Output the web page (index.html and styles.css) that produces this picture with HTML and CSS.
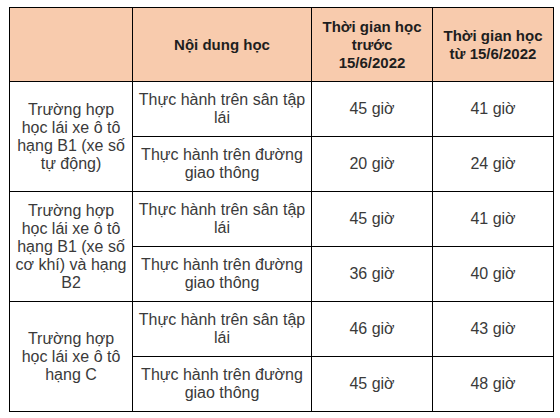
FILE: index.html
```html
<!DOCTYPE html>
<html lang="vi">
<head>
<meta charset="utf-8">
<link rel="stylesheet" href="styles.css">
</head>
<body>
<div class="page">
<table class="schedule">
  <colgroup>
    <col class="c1"><col class="c2"><col class="c3"><col class="c4">
  </colgroup>
  <thead>
    <tr class="head">
      <th></th>
      <th>Nội dung học</th>
      <th>Thời gian học trước 15/6/2022</th>
      <th>Thời gian học từ 15/6/2022</th>
    </tr>
  </thead>
  <tbody>
    <tr class="r">
      <td rowspan="2">Trường hợp học lái xe ô tô hạng B1 (xe số tự động)</td>
      <td>Thực hành trên sân tập lái</td>
      <td>45 giờ</td>
      <td>41 giờ</td>
    </tr>
    <tr class="r">
      <td>Thực hành trên đường giao thông</td>
      <td>20 giờ</td>
      <td>24 giờ</td>
    </tr>
    <tr class="r">
      <td rowspan="2">Trường hợp học lái xe ô tô hạng B1 (xe số cơ khí) và hạng B2</td>
      <td>Thực hành trên sân tập lái</td>
      <td>45 giờ</td>
      <td>41 giờ</td>
    </tr>
    <tr class="r">
      <td>Thực hành trên đường giao thông</td>
      <td>36 giờ</td>
      <td>40 giờ</td>
    </tr>
    <tr class="r">
      <td rowspan="2">Trường hợp học lái xe ô tô hạng C</td>
      <td>Thực hành trên sân tập lái</td>
      <td>46 giờ</td>
      <td>43 giờ</td>
    </tr>
    <tr class="r">
      <td>Thực hành trên đường giao thông</td>
      <td>45 giờ</td>
      <td>48 giờ</td>
    </tr>
  </tbody>
</table>
</div>
</body>
</html>
```
FILE: styles.css
```css
html, body {
  margin: 0;
  padding: 0;
  background: #ffffff;
}
.page {
  padding: 7px 0 0 9px;
}
.schedule {
  border-collapse: collapse;
  table-layout: fixed;
  width: 544px;
  font-family: "Liberation Sans", Arial, sans-serif;
  font-size: 16px;
  line-height: 18px;
  color: #3a3a3a;
}
.c1 { width: 123px; }
.c2 { width: 179px; }
.c3 { width: 121px; }
.c4 { width: 121px; }
.schedule th,
.schedule td {
  border: 1px solid #000;
  padding: 0 3px;
  text-align: center;
  vertical-align: middle;
}
.head {
  height: 74px;
}
.head th {
  background: #f8cbad;
  color: #1e1e1e;
  font-weight: bold;
  font-size: 15px;
  line-height: 18px;
  padding: 0 8px;
}
.r {
  height: 55px;
}
```
